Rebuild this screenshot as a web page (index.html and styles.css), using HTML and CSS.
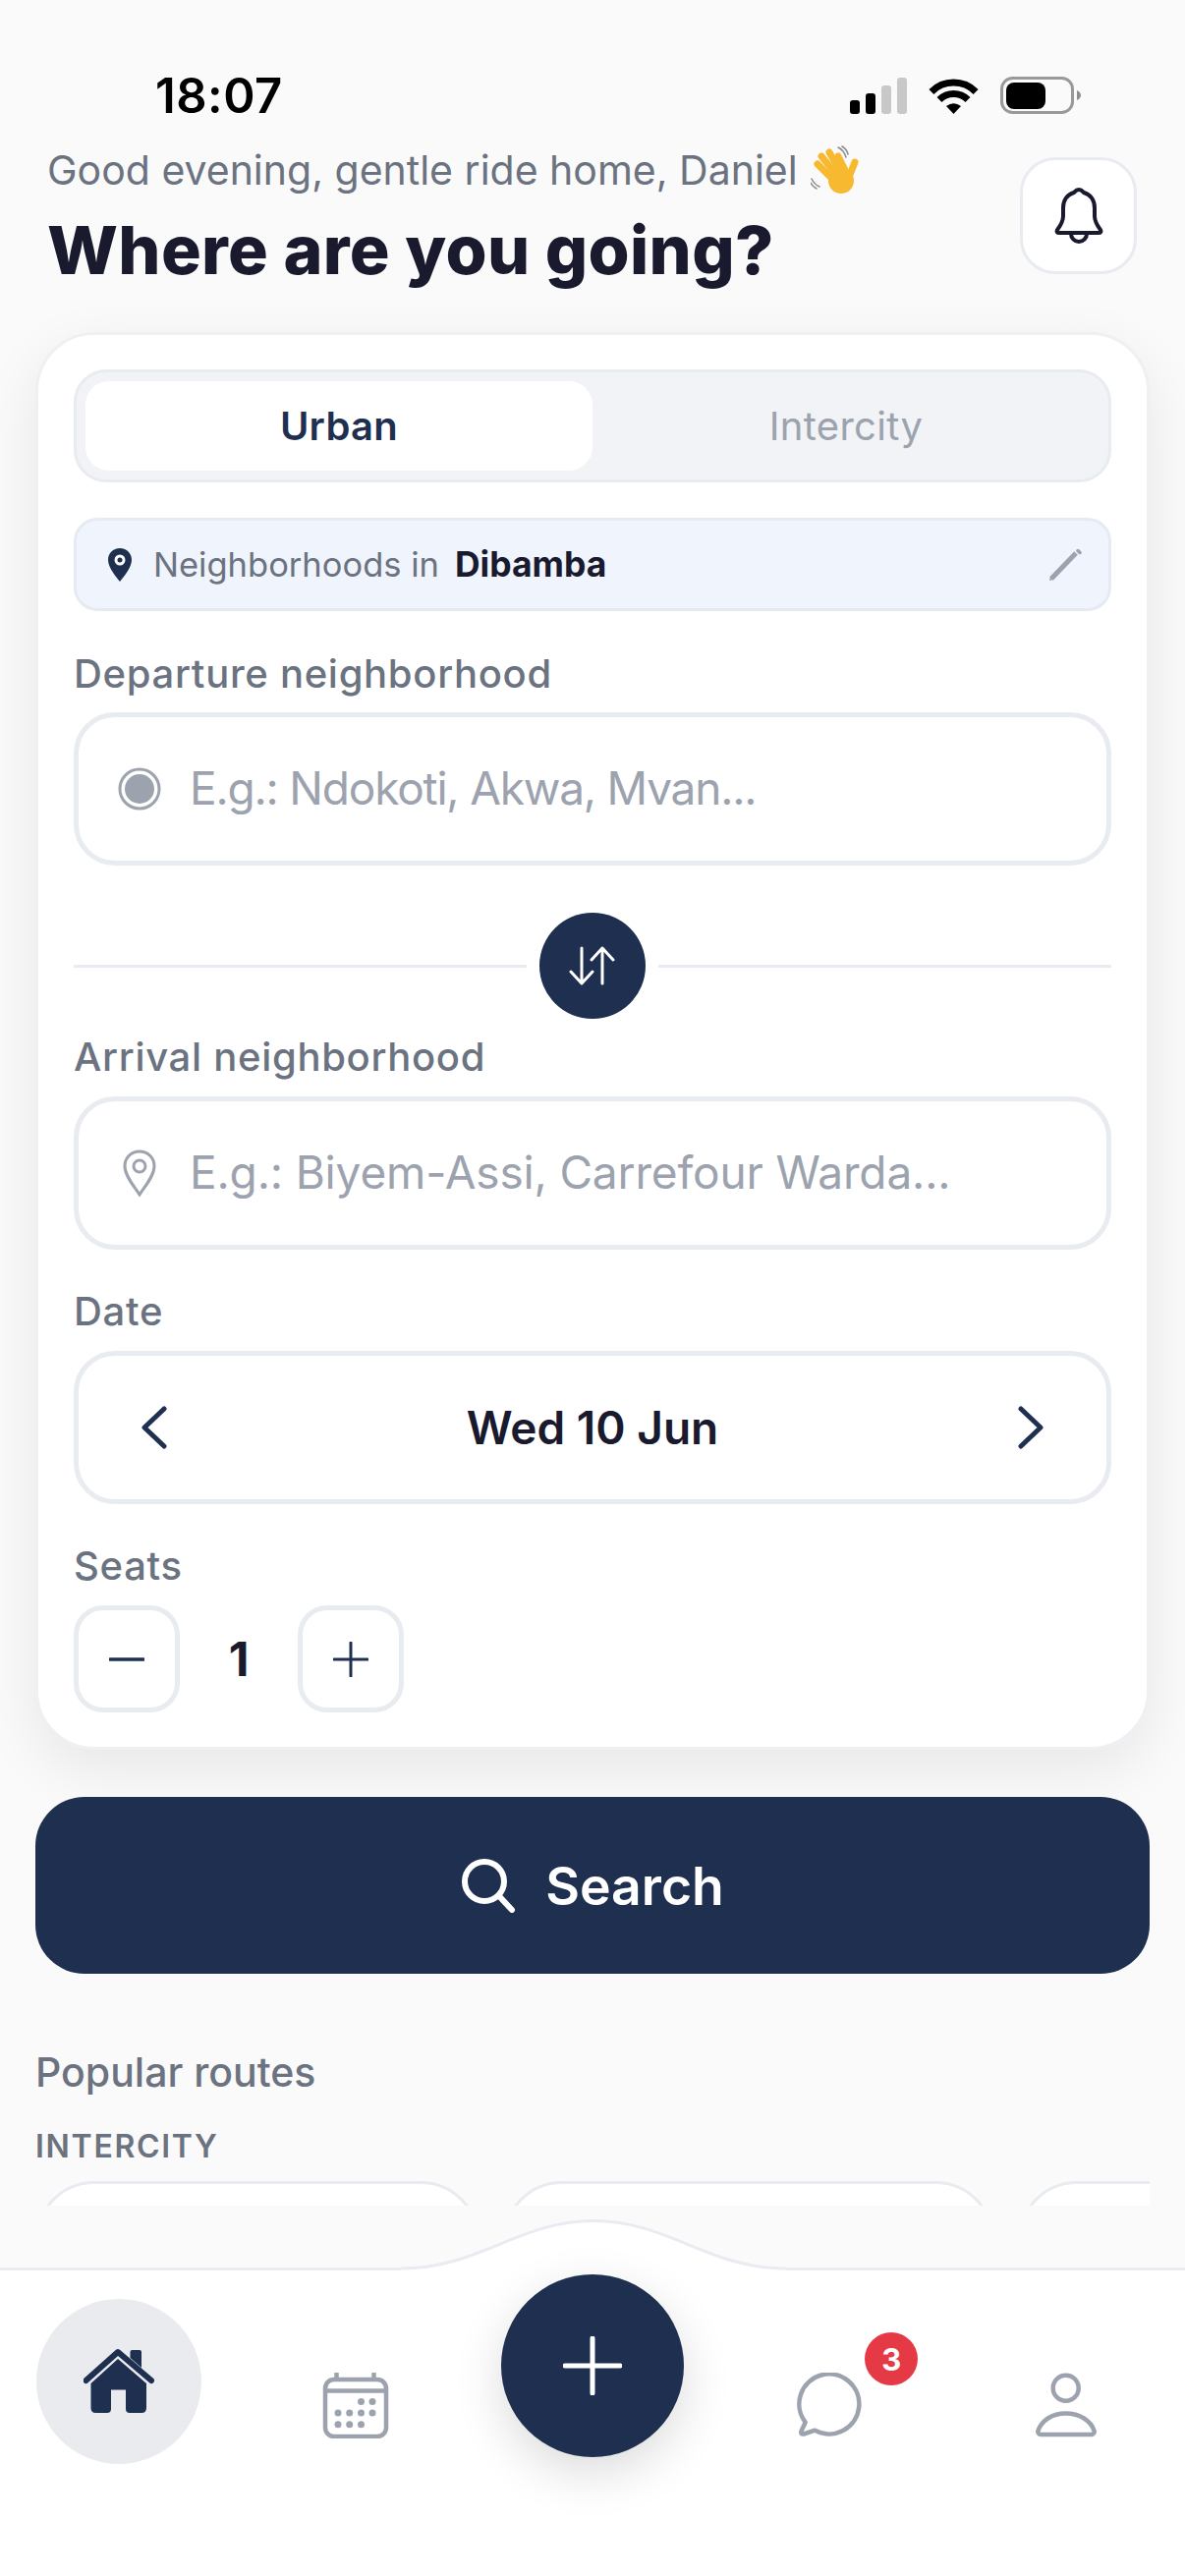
FILE: index.html
```html
<!DOCTYPE html>
<html lang="en">
<head>
<meta charset="UTF-8">
<meta name="viewport" content="width=device-width, initial-scale=1.0">
<title>Where are you going?</title>
<link rel="stylesheet" href="styles.css">
</head>
<body>
<div class="page">
    <div class="status">
        <span class="time">18:07</span>
        <div class="status-icons">
            <svg class="signal" width="58" height="37" viewBox="0 0 58 37"><rect x="0" y="23" width="10" height="14" rx="3" fill="#000"/><rect x="16" y="16" width="10" height="21" rx="3" fill="#000"/><rect x="32" y="8" width="10" height="29" rx="3" fill="#c8c8c8"/><rect x="48" y="0" width="10" height="37" rx="3" fill="#c8c8c8"/></svg>
            <svg class="wifi" width="51" height="37" viewBox="0 0 51 37"><path d="M2.9 14.4A32 32 0 0 1 48.1 14.4" fill="none" stroke="#000" stroke-width="7"/><path d="M11 22.5A20.5 20.5 0 0 1 40 22.5" fill="none" stroke="#000" stroke-width="7"/><path d="M25.5 37L18 29Q25.5 23.5 33 29Z" fill="#000"/></svg>
            <svg class="battery" width="82" height="38" viewBox="0 0 82 38"><rect x="1.5" y="1.5" width="72" height="35" rx="11" fill="none" stroke="#999" stroke-width="3"/><rect x="6" y="6" width="40" height="27" rx="8" fill="#000"/><path d="M78 14q4 2 4 5t-4 5z" fill="#8e8e8e"/></svg>
        </div>
    </div>

    <div class="top">
        <div>
            <div class="greeting">
                <span>Good evening, gentle ride home, Daniel</span>
                <svg class="wave" width="50" height="50" viewBox="0 0 50 50">
                    <g fill="none" stroke="#f7b92f" stroke-width="7" stroke-linecap="round">
                        <path d="M24 36L7 19"/><path d="M27 31L11 11"/><path d="M31 28L19 7"/><path d="M36 27L28 11"/><path d="M38 35L45 17"/>
                    </g>
                    <circle cx="31" cy="36" r="13" fill="#f7b92f"/>
                    <g fill="none" stroke="#8a8a8a" stroke-width="1.5" stroke-linecap="round">
                        <path d="M28 2q6 3 8 10"/><path d="M32 1q5 3 6 8"/><path d="M1 34q3 6 8 8"/><path d="M0 38q2 4 6 6"/>
                    </g>
                </svg>
            </div>
            <h1 class="title">Where are you going?</h1>
        </div>
        <div class="bell-btn">
            <svg width="50" height="58" viewBox="0 0 50 58" fill="none" stroke="#1a1a2e" stroke-width="4" stroke-linejoin="round"><path d="M25 2c-3 0-4 2-5 3C13 7 9 13 9 21v8c0 6-3 10-6 14-1 2 0 3 2 3h40c2 0 3-1 2-3-3-4-6-8-6-14v-8c0-8-4-14-11-16-1-1-2-3-5-3z"/><path d="M17 47a8 8 0 0 0 16 0"/></svg>
        </div>
    </div>

    <div class="card">
        <div class="tabs">
            <div class="tab active">Urban</div>
            <div class="tab">Intercity</div>
        </div>

        <div class="info">
            <svg width="24" height="34" viewBox="0 0 24 34"><path d="M12 0C5 0 0 5 0 12c0 8 9 18 12 22 3-4 12-14 12-22C24 5 19 0 12 0z" fill="#1e2f50"/><circle cx="12" cy="12" r="5.5" fill="#fff"/><circle cx="12" cy="12" r="2.5" fill="#1e2f50"/></svg>
            <span class="info-text">Neighborhoods in</span>
            <span class="info-city">Dibamba</span>
            <svg class="pencil" width="34" height="34" viewBox="0 0 34 34"><path d="M3 31L28 5" stroke="#9ca3af" stroke-width="5" fill="none"/><path d="M30 2.5L32 4.5" stroke="#9ca3af" stroke-width="3.5" stroke-linecap="round"/><path d="M1 33l1-4 3 3z" fill="#9ca3af"/></svg>
        </div>

        <div class="label first">Departure neighborhood</div>
        <div class="field">
            <svg width="44" height="44" viewBox="0 0 44 44"><circle cx="22" cy="22" r="20" fill="none" stroke="#9ca3af" stroke-width="3"/><circle cx="22" cy="22" r="15" fill="#9ca3af"/></svg>
            <span class="placeholder tight">E.g.: Ndokoti, Akwa, Mvan...</span>
        </div>

        <div class="swap-row">
            <div class="line"></div>
            <div class="swap">
                <svg width="50" height="40" viewBox="0 0 50 40" fill="none" stroke="#fff" stroke-width="3" stroke-linecap="round" stroke-linejoin="round"><path d="M14 2V38M3 26L14 38L25 26"/><path d="M35 38V2M24 14L35 2L46 14"/></svg>
            </div>
            <div class="line"></div>
        </div>

        <div class="label arrival">Arrival neighborhood</div>
        <div class="field">
            <svg class="pin-outline" width="34" height="48" viewBox="0 0 34 48" fill="none" stroke="#9ca3af" stroke-width="3"><path d="M17 2C8 2 2 9 2 17c0 10 10 21 15 29 5-8 15-19 15-29C32 9 26 2 17 2z"/><circle cx="17" cy="17" r="6"/></svg>
            <span class="placeholder">E.g.: Biyem-Assi, Carrefour Warda...</span>
        </div>

        <div class="label date-label">Date</div>
        <div class="field date">
            <svg width="26" height="44" viewBox="0 0 26 44" fill="none" stroke="#1e2f50" stroke-width="5" stroke-linecap="round" stroke-linejoin="round"><path d="M23 3L3 22L23 41"/></svg>
            <span class="date-text">Wed 10 Jun</span>
            <svg width="26" height="44" viewBox="0 0 26 44" fill="none" stroke="#1e2f50" stroke-width="5" stroke-linecap="round" stroke-linejoin="round"><path d="M3 3L23 22L3 41"/></svg>
        </div>

        <div class="label date-label">Seats</div>
        <div class="seats">
            <div class="seat-btn"><svg width="36" height="36" viewBox="0 0 36 36"><path d="M1 18H35" stroke="#1e2f50" stroke-width="3.5" stroke-linecap="round"/></svg></div>
            <span class="seat-count">1</span>
            <div class="seat-btn"><svg width="36" height="36" viewBox="0 0 36 36"><path d="M1 18H35M18 1V35" stroke="#1e2f50" stroke-width="3" stroke-linecap="round"/></svg></div>
        </div>
    </div>

    <div class="search">
        <svg width="56" height="56" viewBox="0 0 56 56" fill="none" stroke="#fff" stroke-width="6" stroke-linecap="round"><circle cx="24" cy="24" r="20"/><path d="M39 39L52 53"/></svg>
        <span>Search</span>
    </div>

    <div class="section-title">Popular routes</div>
    <div class="section-sub">INTERCITY</div>
    <div class="routes">
        <div class="route r1"></div>
        <div class="route r2"></div>
        <div class="route r3"></div>
    </div>

    <div class="nav">
        <svg class="hump" width="392" height="53" viewBox="0 0 392 53"><path d="M0 50C80 50 120 1.5 196 1.5C272 1.5 312 50 392 50V53H0Z" fill="#fff"/><path d="M0 50C80 50 120 1.5 196 1.5C272 1.5 312 50 392 50" fill="none" stroke="#e8ebf0" stroke-width="3"/></svg>
        <div class="nav-item home">
            <div class="home-circle">
                <svg width="72" height="68" viewBox="0 0 72 68"><path d="M47.5 4a2 2 0 0 1 2-2H57a2 2 0 0 1 2 2v16l-11.500-10z" fill="#1e2f50"/><path d="M2.500 33L35 4L69 33" fill="none" stroke="#1e2f50" stroke-width="6" stroke-linecap="round" stroke-linejoin="round"/><path d="M35 11L7.500 36V61q0 5 5 5H24q4 0 4-4V42.500H43V62q0 4 4 4h12q5 0 5-5V36z" fill="#1e2f50"/></svg>
            </div>
        </div>
        <div class="nav-item">
            <svg width="68" height="67" viewBox="0 0 68 67" fill="#9ca3af"><rect x="3" y="7" width="62" height="58" rx="9" fill="none" stroke="#9ca3af" stroke-width="4.500"/><path d="M3 18.500H65" stroke="#9ca3af" stroke-width="4.500"/><path d="M14.500 1V6M52.500 1V6" stroke="#9ca3af" stroke-width="4.500" stroke-linecap="round"/><circle cx="39.500" cy="29.500" r="3.500"/><circle cx="51" cy="29.500" r="3.500"/><circle cx="16" cy="41" r="3.500"/><circle cx="27.700" cy="41" r="3.500"/><circle cx="39.500" cy="41" r="3.500"/><circle cx="51" cy="41" r="3.500"/><circle cx="16" cy="52.700" r="3.500"/><circle cx="27.700" cy="52.700" r="3.500"/><circle cx="39.500" cy="52.700" r="3.500"/></svg>
        </div>
        <div class="nav-item fab-cell">
            <div class="fab">
                <svg width="60" height="60" viewBox="0 0 60 60"><path d="M2 30H58M30 2V58" stroke="#fff" stroke-width="5" stroke-linecap="round"/></svg>
            </div>
        </div>
        <div class="nav-item">
            <div class="chat">
                <svg width="66" height="66" viewBox="0 0 66 66" fill="none" stroke="#9ca3af" stroke-width="4.500" stroke-linejoin="round"><path d="M8.700 50.500A30.500 30.500 0 1 1 18.300 58.700L7 62.500Q3.500 63 4.500 59.500Z"/></svg>
                <span class="badge">3</span>
            </div>
        </div>
        <div class="nav-item">
            <svg width="62" height="67" viewBox="0 0 62 67" fill="none" stroke="#9ca3af" stroke-width="4.500" stroke-linejoin="round"><circle cx="30.700" cy="15.700" r="13"/><path d="M5 63H57a3 3 0 0 0 2.500-4C56 49 45 41.500 30.700 41.500S6 49 2.500 59A3 3 0 0 0 5 63z"/></svg>
        </div>
    </div>
</div>
</body>
</html>
```

FILE: styles.css
```css
* {
    box-sizing: border-box;
}

body {
    margin: 0;
    padding: 0;
    background-color: #fafafa;
    font-family: Inter, "Noto Sans", sans-serif;
}

.page {
    width: 1206px;
    height: 2622px;
    overflow: hidden;
    display: flex;
    flex-direction: column;
}

/* status bar */
.status {
    height: 146px;
    padding: 78px 106px 0 158px;
    display: flex;
    justify-content: space-between;
    align-items: flex-start;
}

.time {
    font-size: 49px;
    line-height: 40px;
    font-weight: 600;
    letter-spacing: 0.5px;
    color: #000;
}

.status-icons {
    display: flex;
    align-items: center;
    gap: 22px;
}

/* header */
.top {
    height: 192px;
    padding: 0 49px 0 48px;
    display: flex;
    justify-content: space-between;
    align-items: flex-start;
}

.greeting {
    height: 54px;
    display: flex;
    align-items: center;
    gap: 13px;
    font-size: 41px;
    color: #6b7280;
}

.title {
    margin: 9px 0 0;
    font-size: 68px;
    line-height: 90px;
    font-weight: 800;
    letter-spacing: 0.35px;
    color: #1a1a2e;
}

.bell-btn {
    width: 119px;
    height: 119px;
    margin-top: 14px;
    display: flex;
    align-items: center;
    justify-content: center;
    background-color: #fff;
    border: 3px solid #e8ebf0;
    border-radius: 36px;
}

/* main card */
.card {
    width: 1134px;
    margin-left: 36px;
    padding: 35px 36px 35px;
    background-color: #fff;
    border: 3px solid #eef0f4;
    border-radius: 60px;
    box-shadow: 0 20px 60px rgba(0, 0, 0, 0.08);
}

.tabs {
    height: 115px;
    padding: 9px 9px;
    display: flex;
    background-color: #f1f3f6;
    border: 3px solid #e8ebf0;
    border-radius: 33px;
}

.tab {
    flex: 1;
    display: flex;
    align-items: center;
    justify-content: center;
    font-size: 40px;
    letter-spacing: 0.3px;
    color: #9ca3af;
}

.tab.active {
    background-color: #fff;
    border-radius: 24px;
    font-weight: 600;
    color: #1e2f50;
}

.info {
    height: 95px;
    margin-top: 36px;
    padding: 0 27px 0 32px;
    display: flex;
    align-items: center;
    background-color: #eff4fd;
    border: 3px solid #e6ebf3;
    border-radius: 24px;
    font-size: 34.5px;
}

.info-text {
    margin-left: 22px;
    color: #6b7280;
}

.info-city {
    margin-left: 16px;
    font-size: 35.5px;
    font-weight: 700;
    color: #1a1a2e;
}

.pencil {
    margin-left: auto;
}

.label {
    height: 50px;
    margin-top: 38px;
    margin-bottom: 14px;
    font-size: 40px;
    line-height: 50px;
    font-weight: 500;
    letter-spacing: 0.7px;
    color: #6b7280;
}

.label.first {
    margin-top: 39px;
}

.label.arrival {
    margin-top: 14px;
    margin-bottom: 15px;
}

.label.date-label {
    margin-bottom: 15px;
}

.field {
    height: 156px;
    padding: 0 40px;
    display: flex;
    align-items: center;
    background-color: #fff;
    border: 5px solid #e8ebf0;
    border-radius: 42px;
}

.placeholder {
    margin: 0 0 2px 29px;
    font-size: 46px;
    letter-spacing: -0.15px;
    color: #9ca3af;
}

.placeholder.tight {
    letter-spacing: -1.2px;
}

.pin-outline {
    margin: 0 5px;
}

.swap-row {
    height: 108px;
    margin-top: 48px;
    display: flex;
    align-items: center;
    gap: 13px;
}

.line {
    flex: 1;
    height: 3px;
    background-color: #e8ebf0;
}

.swap {
    width: 108px;
    height: 108px;
    display: flex;
    align-items: center;
    justify-content: center;
    background-color: #1e2f50;
    border-radius: 50%;
}

.date {
    justify-content: space-between;
    padding: 0 64px;
}

.date-text {
    font-size: 46px;
    font-weight: 600;
    color: #1a1a2e;
}

.seats {
    display: flex;
    align-items: center;
}

.seat-btn {
    width: 108px;
    height: 109px;
    display: flex;
    align-items: center;
    justify-content: center;
    background-color: #fff;
    border: 5px solid #e8ebf0;
    border-radius: 30px;
}

.seat-count {
    width: 120px;
    text-align: center;
    font-size: 48px;
    font-weight: 700;
    color: #1a1a2e;
}

/* search button */
.search {
    width: 1134px;
    height: 180px;
    margin: 48px 0 0 36px;
    display: flex;
    align-items: center;
    justify-content: center;
    gap: 30px;
    background-color: #1e2f50;
    border-radius: 50px;
    font-size: 53.5px;
    font-weight: 600;
    color: #fff;
}

/* popular routes */
.section-title {
    margin: 75px 0 0 36px;
    font-size: 41px;
    line-height: 50px;
    font-weight: 500;
    color: #6b7280;
}

.section-sub {
    margin: 31px 0 0 36px;
    font-size: 32px;
    line-height: 40px;
    font-weight: 600;
    letter-spacing: 1.7px;
    color: #6b7280;
}

.routes {
    width: 1134px;
    height: 25px;
    margin: 15px 0 0 36px;
    display: flex;
    gap: 24px;
    overflow: hidden;
}

.route {
    flex: none;
    height: 200px;
    background-color: #fff;
    border: 3px solid #e8ebf0;
    border-radius: 60px;
}

.r1 {
    width: 452px;
}

.r2 {
    width: 500px;
}

.r3 {
    width: 500px;
}

/* bottom nav */
.nav {
    position: relative;
    flex: 1;
    margin-top: 63px;
    display: grid;
    grid-template-columns: repeat(5, 1fr);
    background-color: #fff;
    border-top: 3px solid #e8ebf0;
}

.hump {
    position: absolute;
    left: 408px;
    top: -52px;
}

.nav-item {
    display: flex;
    justify-content: center;
    align-items: flex-start;
    padding-top: 104px;
}

.nav-item.home {
    padding-top: 29px;
}

.home-circle {
    width: 168px;
    height: 168px;
    display: flex;
    align-items: center;
    justify-content: center;
    background-color: #e9ebef;
    border-radius: 50%;
}

.fab-cell {
    padding-top: 4px;
    position: relative;
    z-index: 1;
}

.fab {
    flex: none;
    width: 186px;
    height: 186px;
    display: flex;
    align-items: center;
    justify-content: center;
    background-color: #1e2f50;
    border-radius: 50%;
    box-shadow: 0 16px 50px rgba(0, 0, 0, 0.14);
}

.chat {
    position: relative;
    width: 66px;
    height: 66px;
}

.badge {
    position: absolute;
    left: 69px;
    top: -41px;
    width: 54px;
    height: 54px;
    display: flex;
    align-items: center;
    justify-content: center;
    background-color: #e63946;
    border-radius: 50%;
    font-size: 31px;
    font-weight: 700;
    color: #fff;
}
```
